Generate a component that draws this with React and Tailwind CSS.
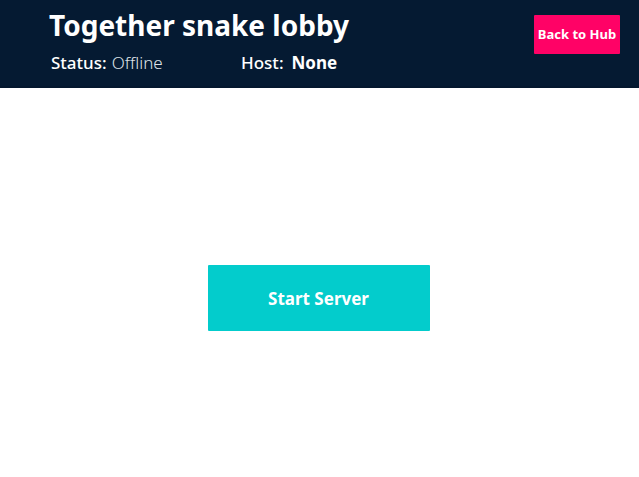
export default function App() {
  return (
    <div className="flex min-h-screen flex-col bg-white font-['Noto_Sans','Open_Sans',sans-serif] text-white">
      <header className="flex h-[88px] items-start justify-between border-b-2 border-[#04172e] bg-[#051a32] pr-[19px] pl-[49px]">
        <div>
          <h1 className="pt-[3px] text-[28px] leading-[45px] font-bold">Together snake lobby</h1>
          <dl className="flex pl-[2px] text-[17px] leading-[30px]">
            <div className="flex w-[190px] gap-[5px]">
              <dt className="font-medium">Status:</dt>
              <dd className="font-light text-[#dfe3e8]">Offline</dd>
            </div>
            <div className="flex gap-2">
              <dt className="font-medium">Host:</dt>
              <dd className="font-bold">None</dd>
            </div>
          </dl>
        </div>
        <button type="button" className="mt-[15px] h-[39px] w-[86px] rounded-[1px] bg-[#ff0266] pt-px text-[13px] font-bold whitespace-nowrap">
          Back to Hub
        </button>
      </header>
      <main className="flex flex-1 items-start justify-center pt-[177px] pr-[2px]">
        <button type="button" className="h-[66px] w-[222px] rounded-[1px] bg-[#03cccc] pt-px text-[17px] font-bold">
          Start Server
        </button>
      </main>
    </div>
  );
}
